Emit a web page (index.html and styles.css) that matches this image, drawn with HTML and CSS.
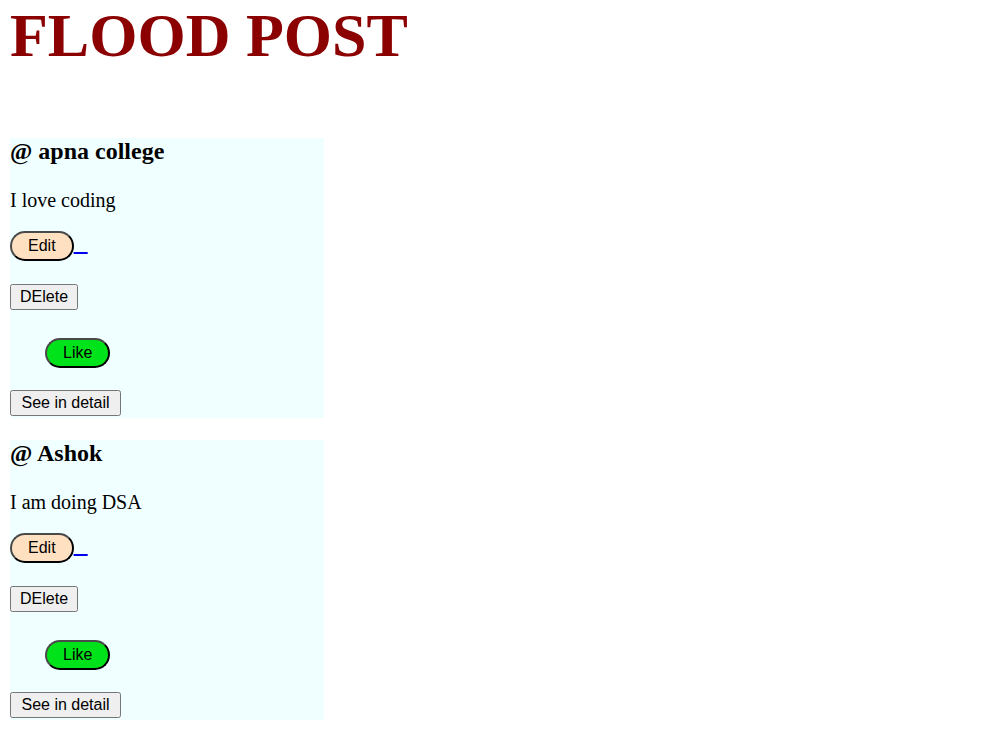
FILE: index.html
```
<!DOCTYPE html>
<html>
<head>
<meta charset="utf-8">
<title>Flood Post</title>
<link rel="stylesheet" href="styles.css">
</head>
<body>
<h1 class="title">FLOOD POST</h1>

<div class="post">
  <h2 class="user">@ apna college</h2>
  <p class="content">I love coding</p>
  <div class="row row-edit"><a class="edit-link" href="#"><button class="btn-edit">Edit</button>&nbsp;&nbsp;&nbsp;</a></div>
  <form class="row row-delete"><button type="button" class="btn">DElete</button></form>
  <form class="row row-like"><button type="button" class="btn-like">Like</button></form>
  <div class="row row-detail"><a href="#"><button class="btn btn-detail">See in detail</button></a></div>
</div>

<div class="post">
  <h2 class="user">@ Ashok</h2>
  <p class="content">I am doing DSA</p>
  <div class="row row-edit"><a class="edit-link" href="#"><button class="btn-edit">Edit</button>&nbsp;&nbsp;&nbsp;</a></div>
  <form class="row row-delete"><button type="button" class="btn">DElete</button></form>
  <form class="row row-like"><button type="button" class="btn-like">Like</button></form>
  <div class="row row-detail"><a href="#"><button class="btn btn-detail">See in detail</button></a></div>
</div>
</body>
</html>
```
FILE: styles.css
```
body {
  margin: 0;
  padding: 0 10px;
  font-family: "Liberation Serif", "Times New Roman", serif;
  font-size: 16px;
  background: #ffffff;
}

.title {
  margin: 0 0 67px 0;
  font-size: 62px;
  font-weight: bold;
  color: #8b0000;
}

.post {
  width: 314px;
  background-color: #f0ffff;
  margin-bottom: 22px;
  padding-bottom: 2px;
}

.user {
  margin: 0 0 24px 0;
  font-size: 24px;
  font-weight: bold;
}

.content {
  margin: 0;
  font-size: 20px;
}

.row {
  margin: 0;
}

.row-edit { margin-top: 19px; }
.row-delete { margin-top: 23px; }
.row-like { margin-top: 28px; padding-left: 35px; }
.row-detail { margin-top: 22px; }

.edit-link {
  color: #0000ee;
  text-decoration-thickness: 2px;
  letter-spacing: 0.7px;
}

.btn {
  font-family: "Liberation Sans", Arial, sans-serif;
  font-size: 16px;
  padding: 2px 8px;
  letter-spacing: 0;
}

.btn-detail {
  padding: 2px 9.5px;
}

.btn-edit,
.btn-like {
  font-family: "Liberation Sans", Arial, sans-serif;
  font-size: 16px;
  padding: 4px 16px;
  border-radius: 16px;
  border: 2px outset #4a4a4a;
  color: #000;
  letter-spacing: 0;
}

.btn-edit { background-color: #ffe0c0; }
.btn-like { background-color: #00e31a; }
```
